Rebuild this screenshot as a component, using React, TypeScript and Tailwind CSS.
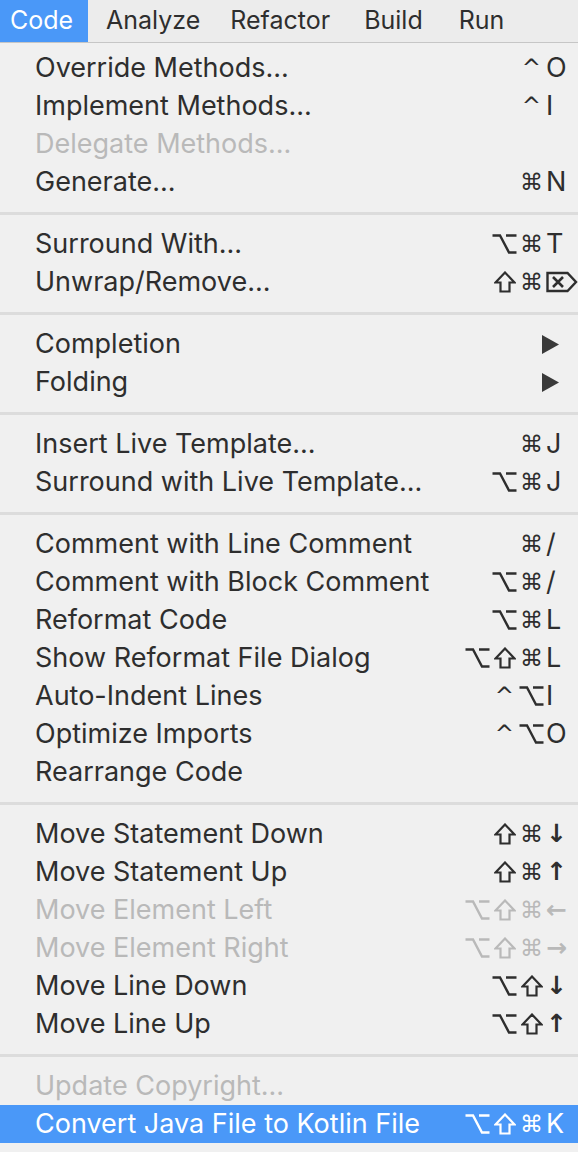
import clsx from 'clsx';

type Item =
    | { sep: true }
    | { label: string; mods?: string[]; key?: string; disabled?: boolean; active?: boolean; submenu?: boolean; sep?: false };

const items: Item[] = [
    { label: 'Override Methods...', mods: ['^'], key: 'O' },
    { label: 'Implement Methods...', mods: ['^'], key: 'I' },
    { label: 'Delegate Methods...', disabled: true },
    { label: 'Generate...', mods: ['⌘'], key: 'N' },
    { sep: true },
    { label: 'Surround With...', mods: ['⌥', '⌘'], key: 'T' },
    { label: 'Unwrap/Remove...', mods: ['⇧', '⌘'], key: '⌦' },
    { sep: true },
    { label: 'Completion', submenu: true },
    { label: 'Folding', submenu: true },
    { sep: true },
    { label: 'Insert Live Template...', mods: ['⌘'], key: 'J' },
    { label: 'Surround with Live Template...', mods: ['⌥', '⌘'], key: 'J' },
    { sep: true },
    { label: 'Comment with Line Comment', mods: ['⌘'], key: '/' },
    { label: 'Comment with Block Comment', mods: ['⌥', '⌘'], key: '/' },
    { label: 'Reformat Code', mods: ['⌥', '⌘'], key: 'L' },
    { label: 'Show Reformat File Dialog', mods: ['⌥', '⇧', '⌘'], key: 'L' },
    { label: 'Auto-Indent Lines', mods: ['^', '⌥'], key: 'I' },
    { label: 'Optimize Imports', mods: ['^', '⌥'], key: 'O' },
    { label: 'Rearrange Code' },
    { sep: true },
    { label: 'Move Statement Down', mods: ['⇧', '⌘'], key: '↓' },
    { label: 'Move Statement Up', mods: ['⇧', '⌘'], key: '↑' },
    { label: 'Move Element Left', mods: ['⌥', '⇧', '⌘'], key: '←', disabled: true },
    { label: 'Move Element Right', mods: ['⌥', '⇧', '⌘'], key: '→', disabled: true },
    { label: 'Move Line Down', mods: ['⌥', '⇧'], key: '↓' },
    { label: 'Move Line Up', mods: ['⌥', '⇧'], key: '↑' },
    { sep: true },
    { label: 'Update Copyright...', disabled: true },
    { label: 'Convert Java File to Kotlin File', mods: ['⌥', '⇧', '⌘'], key: 'K', active: true },
];

const glyph = '[font-family:"DejaVu_Sans",sans-serif]';

function ShiftIcon() {
    return (
        <svg width="22" height="22" viewBox="0 0 22 22" className="inline-block">
            <path d="M11 1.5 L20.5 11.5 H15.5 V20.5 H6.5 V11.5 H1.5 Z" fill="none" stroke="currentColor" strokeWidth="2.2" strokeLinejoin="miter" />
        </svg>
    );
}

function OptionIcon() {
    return (
        <svg width="25" height="22" viewBox="0 0 25 22" className="inline-block">
            <path d="M0.5 2.5 H8 L17 19.5 H24.5 M14 2.5 H24.5" fill="none" stroke="currentColor" strokeWidth="2.4" />
        </svg>
    );
}

function DeleteIcon() {
    return (
        <svg width="32" height="22" viewBox="0 0 32 22" className="inline-block">
            <path d="M1.5 2 H21.5 L30 11 L21.5 20 H1.5 Z" fill="none" stroke="currentColor" strokeWidth="2.4" />
            <path d="M7 6 L17 16 M17 6 L7 16" stroke="currentColor" strokeWidth="2.6" />
        </svg>
    );
}

function Mod({ m }: { m: string }) {
    return (
        <span className="w-[27px] flex justify-center items-center text-[23px]">
            {m === '⇧' ? <ShiftIcon /> : m === '⌥' ? <OptionIcon /> : m}
        </span>
    );
}

export default function App() {
    return (
        <div className="w-[578px] h-[1152px] bg-[#f0f0f0] overflow-hidden text-[#2e2e2e] [font-family:Inter,'Liberation_Sans',sans-serif]">
            {/* Menu bar */}
            <div className="flex items-center h-[43px] bg-[#ececec] border-b border-[#c6c6c6] text-[25px]">
                <div className="h-full flex items-center w-[88px] pl-[10px] bg-[#4a98f8] text-white">Code</div>
                <div className="ml-[18px]">Analyze</div>
                <div className="ml-[30px]">Refactor</div>
                <div className="ml-[34px]">Build</div>
                <div className="ml-[36px]">Run</div>
            </div>

            {/* Dropdown */}
            <div className="pt-[6px] text-[27px]">
                {items.map((it, i) => {
                    if (it.sep) {
                        return (
                            <div key={i} className="h-[24px] flex items-center">
                                <div className="w-full h-[3px] bg-[#dcdcdc]" />
                            </div>
                        );
                    }
                    return (
                        <div
                            key={i}
                            className={clsx(
                                'flex items-center h-[38px] pl-[35px] whitespace-nowrap',
                                it.active && 'bg-[#4a98f8] text-white',
                                it.disabled && 'text-[#b9b9b9]'
                            )}
                        >
                            <span className="flex-1">{it.label}</span>
                            {it.submenu && (
                                <svg width="17" height="19" viewBox="0 0 17 19" className="mr-[19px]">
                                    <path d="M0 0 L17 9.5 L0 19 Z" fill="#3a3a3a" />
                                </svg>
                            )}
                            {it.key && (
                                <>
                                    <span className={clsx('flex justify-end items-center', glyph)}>
                                        {it.mods?.map((m, j) => <Mod key={j} m={m} />)}
                                    </span>
                                    <span className="w-[33px] pl-[1px] flex items-center">
                                        {it.key === '⌦' ? (
                                            <DeleteIcon />
                                        ) : (
                                            <span className={clsx(['↓', '↑', '←', '→'].includes(it.key) && clsx(glyph, 'text-[25px] font-bold'))}>
                                                {it.key}
                                            </span>
                                        )}
                                    </span>
                                </>
                            )}
                        </div>
                    );
                })}
            </div>
        </div>
    );
}
